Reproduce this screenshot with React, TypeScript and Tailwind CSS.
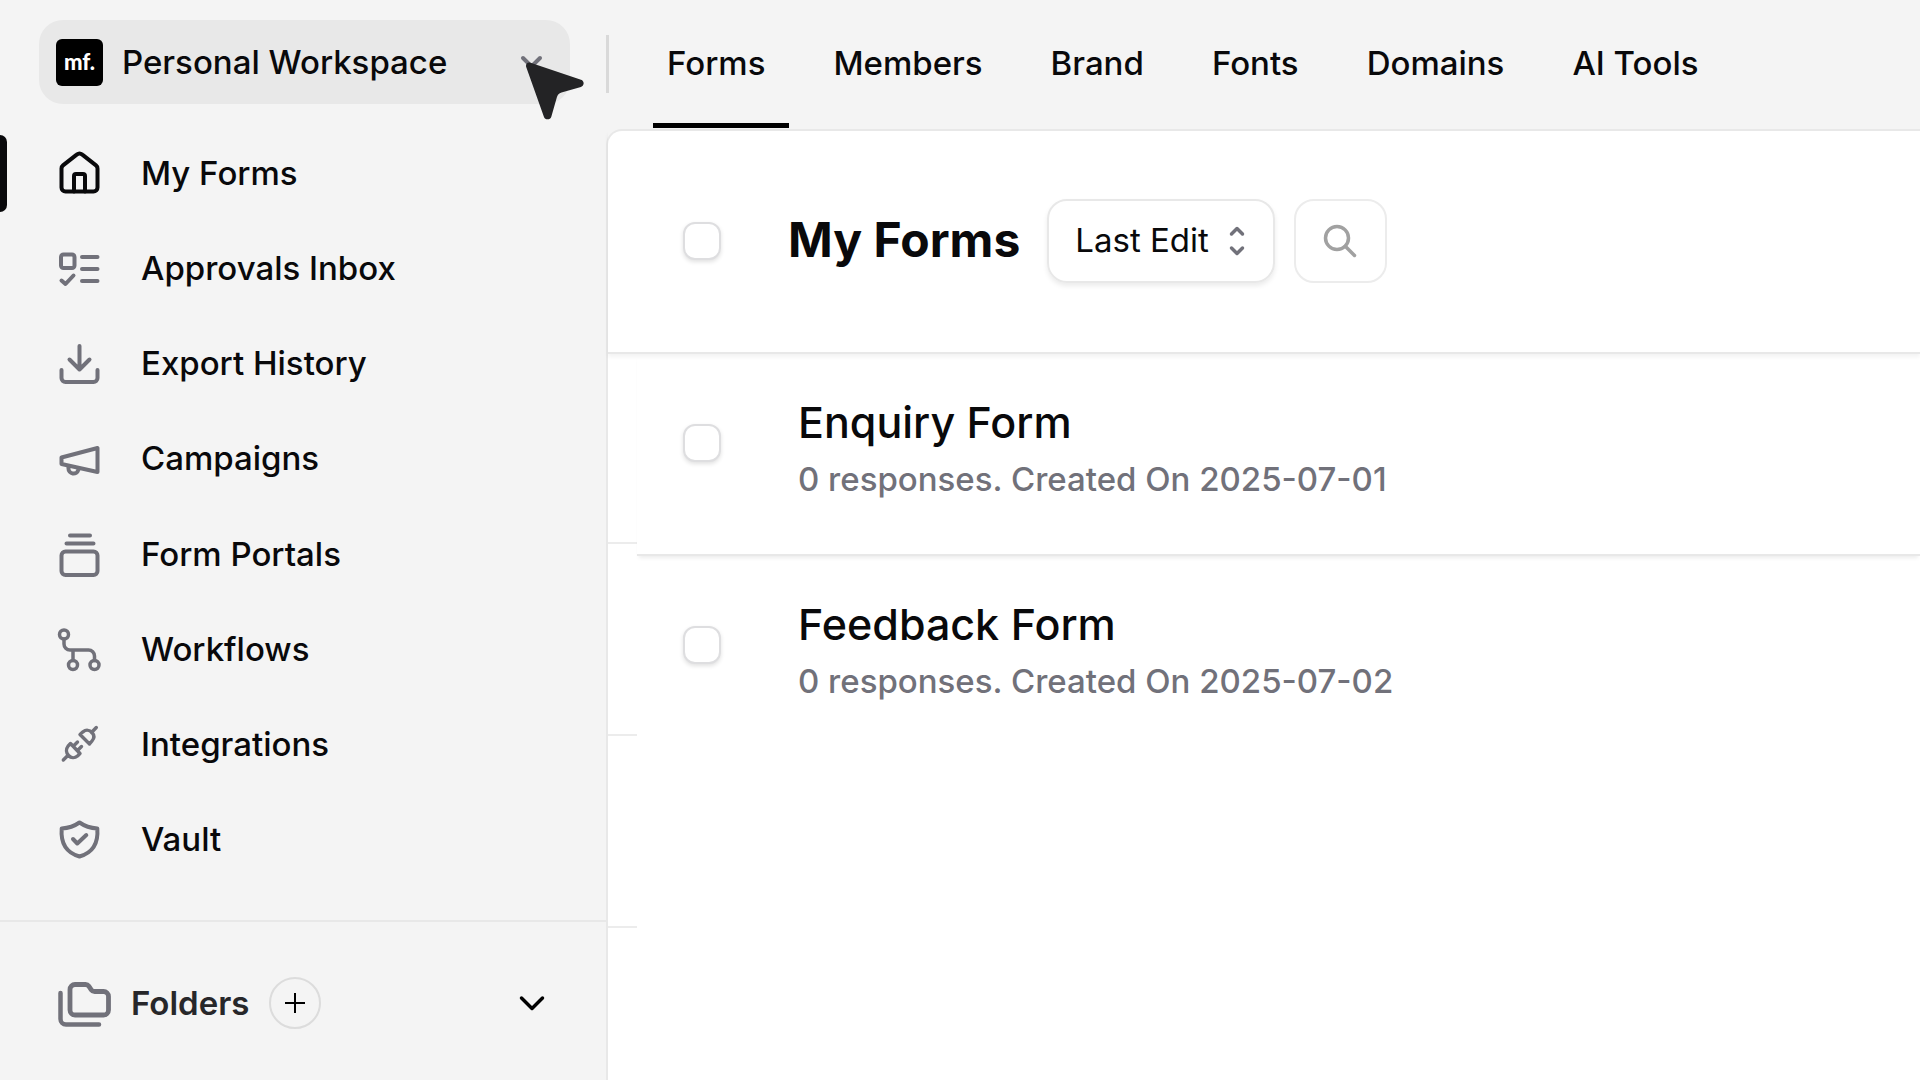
import React, { useState } from "react";

interface IconProps {
  children: React.ReactNode;
  strokeWidth?: number;
}

function NavIcon({ children, strokeWidth = 4 }: IconProps) {
  return (
    <svg
      viewBox="0 0 48 48"
      className="size-12 shrink-0"
      fill="none"
      stroke="currentColor"
      strokeWidth={strokeWidth}
      strokeLinecap="round"
      strokeLinejoin="round"
      aria-hidden="true"
    >
      {children}
    </svg>
  );
}

const NAV_ITEMS = [
  {
    label: "My Forms",
    icon: (
      <NavIcon>
        <path d="M5.5 18.5a4 4 0 0 1 1.5-3.1L20.7 4.6a4.4 4.4 0 0 1 5.6 0L40 15.4a4 4 0 0 1 1.5 3.1V37.5a4 4 0 0 1-4 4h-28a4 4 0 0 1-4-4z" />
        <path d="M18 41.5V26a2 2 0 0 1 2-2h7a2 2 0 0 1 2 2v15.5" />
      </NavIcon>
    ),
  },
  {
    label: "Approvals Inbox",
    icon: (
      <NavIcon>
        <rect x="5" y="9.5" width="13.5" height="13.5" rx="2.5" />
        <path d="M5.5 35.5l4 3.5 8-8.5M26 12h15.5M26 24h15.5M26 36h15.5" />
      </NavIcon>
    ),
  },
  {
    label: "Export History",
    icon: (
      <NavIcon>
        <path d="M23.5 6v23.5M13.5 19.5l10 10 10-10M5.5 30v8a4 4 0 0 0 4 4h28a4 4 0 0 0 4-4v-8" />
      </NavIcon>
    ),
  },
  {
    label: "Campaigns",
    icon: (
      <NavIcon>
        <path d="M41.5 13v24L5.5 29v-6.5z" />
        <path d="M12.5 31v2.5a5 5 0 0 0 9.8 1.5l.5-1.7" />
      </NavIcon>
    ),
  },
  {
    label: "Form Portals",
    icon: (
      <NavIcon>
        <rect x="5.5" y="20.5" width="36" height="23.5" rx="4" />
        <path d="M14 4.5h20M10.5 12.5h27" />
      </NavIcon>
    ),
  },
  {
    label: "Workflows",
    icon: (
      <NavIcon strokeWidth={3.5}>
        <circle cx="8" cy="8.5" r="4.5" />
        <circle cx="17" cy="39" r="4.5" />
        <circle cx="38.5" cy="39" r="4.5" />
        <path d="M8 13v5a6 6 0 0 0 6 6h18.5a6 6 0 0 1 6 6v4.5M17 24v10.5" />
      </NavIcon>
    ),
  },
  {
    label: "Integrations",
    icon: (
      <NavIcon strokeWidth={3.4}>
        <path d="M40.3 6.5l-4.8 5M24 13.5l9.5 9.5 2.5-3c2.3-2.7 2.3-6 0-8.5s-6-3-9-.7z" />
        <path d="M7.3 39l4.5-4.5M14.5 22.5l9.5 10-2.5 2.5c-2.7 2.3-6.5 2.3-9-.5s-2.7-6.5-.5-9.3zM17.5 25l4-4M21.5 29.5l4-4" />
      </NavIcon>
    ),
  },
  {
    label: "Vault",
    icon: (
      <NavIcon>
        <path d="M23.5 6.5c-5 3.5-10.5 5.5-17.8 6-1.2 15 5.3 24.5 17.8 28 12.5-3.5 19-13 17.8-28-7.3-.5-12.8-2.5-17.8-6z" />
        <path d="M17 23l4.3 4.5 9-8.5" />
      </NavIcon>
    ),
  },
];

const TABS = ["Forms", "Members", "Brand", "Fonts", "Domains", "AI Tools"];

const FORMS = [
  { id: 1, name: "Enquiry Form", responses: 0, created: "2025-07-01" },
  { id: 2, name: "Feedback Form", responses: 0, created: "2025-07-02" },
];

function Checkbox({ label }: { label: string }) {
  return (
    <input
      type="checkbox"
      aria-label={label}
      className="size-[38px] shrink-0 appearance-none rounded-xl border-2 border-[#dedee0] bg-white shadow-[0_2px_4px_rgba(0,0,0,0.12)] checked:bg-black"
    />
  );
}

function Sidebar() {
  const [active, setActive] = useState("My Forms");

  return (
    <aside className="w-[606px] shrink-0 pt-5">
      <div className="relative mr-9 ml-[39px]">
        <button
          type="button"
          className="flex h-[84px] w-full items-center rounded-3xl bg-[#e8e8e8] pr-6 pl-[17px] text-left"
        >
          <span className="flex size-[47px] items-center justify-center rounded-md bg-black font-['Lato',sans-serif] text-[22px] leading-6 font-black text-white">
            mf.
          </span>
          <span className="ml-[19px] flex-1">Personal Workspace</span>
          <svg
            viewBox="0 0 28 20"
            className="h-5 w-7 text-[#71717a]"
            fill="none"
            stroke="currentColor"
            strokeWidth="4"
            strokeLinecap="round"
            aria-hidden="true"
          >
            <path d="M5 6l8.5 8.5L22 6" />
          </svg>
        </button>
        {/* pointer */}
        <svg viewBox="0 0 60 60" className="absolute top-[42px] -right-4 size-[60px]" aria-hidden="true">
          <path
            d="M.2 5C-.7 1.9 1.6-.3 4.500.8L55 17.7c3.6 1.3 3.5 6-.1 7.200L35.500 30.500c-2.500.8-4 2.300-4.700 5l-5.500 19.200c-1 3.500-6.400 3.500-7.400 0z"
            fill="#232325"
          />
        </svg>
      </div>

      <nav aria-label="Workspace" className="mt-[22px] flex min-h-[762px] flex-col">
        {NAV_ITEMS.map((item) => {
          const isActive = item.label === active;
          return (
            <button
              key={item.label}
              type="button"
              onClick={() => setActive(item.label)}
              className="flex flex-1 items-center text-left"
            >
              <span className={`h-[77px] w-[7px] rounded-r-lg ${isActive ? "bg-[#09090b]" : ""}`} />
              <span className={`ml-[49px] ${isActive ? "text-[#09090b]" : "text-[#71717a]"}`}>
                {item.icon}
              </span>
              <span className="ml-[37px] pb-0.5">{item.label}</span>
            </button>
          );
        })}
      </nav>

      <div className="mt-8 flex h-[164px] items-center border-t-2 border-[#e8e8e8] pr-[59px] pl-14">
        <svg
          viewBox="0 0 56 56"
          className="size-14 shrink-0 text-[#71717a]"
          fill="none"
          stroke="currentColor"
          strokeLinecap="round"
          strokeLinejoin="round"
          aria-hidden="true"
        >
          <path strokeWidth="4.5" d="M4.5 18v26a5.5 5.5 0 0 0 5.5 5.5h33" />
          <path
            strokeWidth="4.8"
            d="M14 35V14.5a5 5 0 0 1 5-5h10.5a4 4 0 0 1 3.3 1.7l2.5 3.6A4 4 0 0 0 38.6 16.5H47.5a5 5 0 0 1 5 5V35a5 5 0 0 1-5 5H19a5 5 0 0 1-5-5z"
          />
        </svg>
        <h2 className="ml-[19px] font-semibold text-[#27272a]">Folders</h2>
        <button
          type="button"
          aria-label="Add folder"
          className="ml-5 flex size-[52px] items-center justify-center rounded-full border-2 border-[#dcdcdc] text-black"
        >
          <svg viewBox="0 0 20 20" className="size-5" stroke="currentColor" strokeWidth="2" aria-hidden="true">
            <path d="M10 0v20M0 10h20" />
          </svg>
        </button>
        <button type="button" aria-label="Toggle folders" className="ml-auto text-black">
          <svg
            viewBox="0 0 30 20"
            className="h-5 w-[30px]"
            fill="none"
            stroke="currentColor"
            strokeWidth="3.5"
            strokeLinecap="round"
            strokeLinejoin="round"
            aria-hidden="true"
          >
            <path d="M4.5 5L15 15.5 25.5 5" />
          </svg>
        </button>
      </div>
    </aside>
  );
}

export default function App() {
  const [tab, setTab] = useState("Forms");

  return (
    <div className="flex min-h-screen overflow-hidden bg-[#f4f4f4] font-['Inter',sans-serif] text-[33px] leading-[44px] font-medium text-[#09090b]">
      <Sidebar />

      <div className="flex min-w-0 flex-1 flex-col">
        <header className="flex h-[129px] items-start">
          <div className="mt-[35px] h-[58px] w-[3px] shrink-0 bg-[#d9d9d9]" />
          <div role="tablist" className="ml-11 flex h-32 gap-[30px]">
            {TABS.map((name) => (
              <button
                key={name}
                type="button"
                role="tab"
                aria-selected={name === tab}
                onClick={() => setTab(name)}
                className={`border-b-[5px] pt-0.5 pr-6 pl-3.5 whitespace-nowrap ${
                  name === tab ? "border-black" : "border-transparent"
                }`}
              >
                {name}
              </button>
            ))}
          </div>
        </header>

        <main className="flex-1 rounded-tl-2xl border-t-2 border-l-2 border-[#e8e8e8] bg-white">
          <div className="flex h-[223px] items-center border-b-2 border-[#e8e8e8] pb-0.5 pl-[75px] shadow-[0_3px_4px_rgba(0,0,0,0.05)]">
            <Checkbox label="Select all forms" />
            <h1 className="ml-[67px] pb-0.5 text-5xl font-bold">My Forms</h1>
            <button
              type="button"
              className="ml-[27px] flex h-[84px] items-center rounded-[20px] border-2 border-[#e8e8e8] pr-7 pl-[26px] font-normal shadow-[0_3px_5px_rgba(0,0,0,0.08)]"
            >
              <span className="pb-0.5">Last Edit</span>
              <svg
                viewBox="0 0 16 30"
                className="ml-5 h-[30px] w-4 text-[#71717a]"
                fill="none"
                stroke="currentColor"
                strokeWidth="3.5"
                strokeLinecap="round"
                strokeLinejoin="round"
                aria-hidden="true"
              >
                <path d="M2.5 8L8 2.5 13.5 8M2.5 22L8 27.5 13.5 22" />
              </svg>
            </button>
            <button
              type="button"
              aria-label="Search forms"
              className="ml-[19px] flex h-[84px] w-[93px] items-center justify-center rounded-[20px] border-2 border-[#ececec] text-[#a1a1a1]"
            >
              <svg
                viewBox="0 0 34 34"
                className="size-[34px]"
                fill="none"
                stroke="currentColor"
                strokeWidth="3.5"
                strokeLinecap="round"
                aria-hidden="true"
              >
                <circle cx="14" cy="14" r="11.5" />
                <path d="M22.3 22.3l9.2 9.2" />
              </svg>
            </button>
          </div>

          <div className="flex">
            <div className="w-[29px] shrink-0">
              <div className="h-[190px] border-b-2 border-[#ececec]" />
              <div className="h-48 border-b-2 border-[#ececec]" />
              <div className="h-48 border-b-2 border-[#ececec]" />
            </div>
            <ul className="flex-1">
              {FORMS.map((form) => (
                <li
                  key={form.id}
                  className="flex h-[202px] items-start border-b-2 border-[#e8e8e8] pl-[46px] shadow-[0_4px_4px_-2px_rgba(0,0,0,0.08)] last:border-transparent last:shadow-none"
                >
                  <div className="flex h-[178px] items-center">
                    <Checkbox label={`Select ${form.name}`} />
                  </div>
                  <div className="ml-[77px] pt-[39px]">
                    <a href="#" className="block text-[43px] leading-[58px]">
                      {form.name}
                    </a>
                    <p className="mt-1.5 text-[#71717a]">
                      {form.responses} responses. Created On {form.created}
                    </p>
                  </div>
                </li>
              ))}
            </ul>
          </div>
        </main>
      </div>
    </div>
  );
}
